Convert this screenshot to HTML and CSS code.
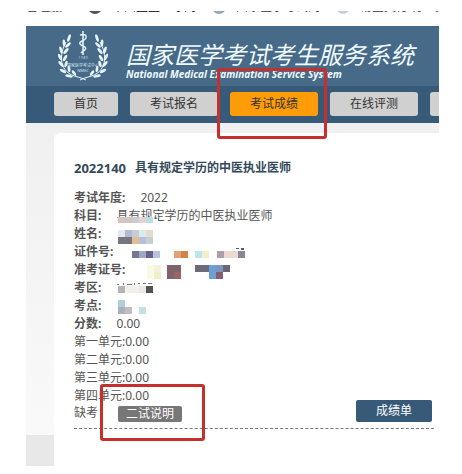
FILE: index.html
```html
<!DOCTYPE html>
<html lang="zh-CN">
<head>
<meta charset="utf-8">
<meta name="viewport" content="width=device-width, initial-scale=1">
<title>国家医学考试考生服务系统</title>
<link rel="stylesheet" href="styles.css">
</head>
<body>
<div class="page">
  <div class="bookmarks">
    <span>管理服</span>
    <span><i class="dot dark"></i>中国卫生人才网</span>
    <span><i class="dot"></i>国家医学考试网</span>
    <span><i class="dot pale"></i>易宝支付 行业支</span>
  </div>
  <header class="banner">
    <svg class="emblem" viewBox="0 0 50 52" aria-hidden="true">
      <defs>
        <g id="branch">
          <path d="M8 12C1 24 0 43 20 47Q24 48 28 50" fill="none" stroke="#e8f6ff" stroke-width="1"/>
          <g fill="#e8f6ff">
            <ellipse cx="11" cy="8" rx="1.4" ry="4" transform="rotate(18 11 8)"/>
            <ellipse cx="6" cy="13" rx="1.4" ry="3.6" transform="rotate(-5 6 13)"/>
            <ellipse cx="10" cy="15" rx="1.4" ry="3.6" transform="rotate(45 10 15)"/>
            <ellipse cx="3" cy="20" rx="1.4" ry="3.6" transform="rotate(-18 3 20)"/>
            <ellipse cx="8" cy="21" rx="1.4" ry="3.6" transform="rotate(40 8 21)"/>
            <ellipse cx="2" cy="27" rx="1.4" ry="3.6" transform="rotate(-28 2 27)"/>
            <ellipse cx="7" cy="28" rx="1.4" ry="3.6" transform="rotate(30 7 28)"/>
            <ellipse cx="3" cy="34" rx="1.4" ry="3.6" transform="rotate(-42 3 34)"/>
            <ellipse cx="8" cy="34" rx="1.4" ry="3.4" transform="rotate(15 8 34)"/>
            <ellipse cx="5" cy="41" rx="1.4" ry="3.6" transform="rotate(-60 5 41)"/>
            <ellipse cx="11" cy="39" rx="1.4" ry="3.2" transform="rotate(-5 11 39)"/>
            <ellipse cx="11" cy="46" rx="1.4" ry="3.8" transform="rotate(-78 11 46)"/>
            <ellipse cx="16" cy="43" rx="1.4" ry="3.2" transform="rotate(-35 16 43)"/>
          </g>
        </g>
      </defs>
      <use href="#branch"/>
      <use href="#branch" transform="translate(50 0) scale(-1 1)"/>
      <path d="M25 1V25M22 5Q29 3 28 8Q27 10 24 11Q20 13 23 15L27 17Q29 19 25 21L23 23" fill="none" stroke="#e8f6ff" stroke-width="1.5"/>
      <g fill="#cfe6f2" text-anchor="middle">
        <text x="25" y="29" font-size="3">1 9 8 5</text>
        <text x="25" y="37" font-size="4">国家医学考试中心</text>
        <text x="25" y="42" font-size="4">NMEC</text>
      </g>
    </svg>
    <div class="brand">
      <h1>国家医学考试考生服务系统</h1>
      <p>National Medical Examination Service System</p>
    </div>
  </header>
  <nav class="menu">
    <a href="#">首页</a>
    <a href="#">考试报名</a>
    <a href="#" class="active">考试成绩<span class="mark mark-menu"></span></a>
    <a href="#">在线评测</a>
    <a href="#" aria-label="更多"></a>
  </nav>
  <div class="body">
    <main class="panel">
      <h2><span class="code">2022140</span>具有规定学历的中医执业医师</h2>
      <section class="record">
        <dl>
          <div><dt>考试年度:</dt><dd>2022</dd></div>
          <div><dt>科目:</dt><dd>具有规定学历的中医执业医师</dd></div>
          <div><dt>姓名:</dt><dd></dd></div>
          <div><dt>证件号:</dt><dd></dd></div>
          <div><dt>准考证号:</dt><dd></dd></div>
          <div><dt>考区:</dt><dd></dd></div>
          <div><dt>考点:</dt><dd></dd></div>
          <div><dt>分数:</dt><dd>0.00</dd></div>
        </dl>
        <svg class="mosaic" viewBox="0 0 190 130" shape-rendering="crispEdges" aria-hidden="true">
          <path fill="#fff" d="M42 30h42v6H42z"/>
          <path fill="#d3c6c2" d="M44 28h14v6H44z"/><path fill="#c9cbd5" d="M58 28h7v6h-7z"/><path fill="#e4d4cb" d="M65 28h7v6h-7z"/><path fill="#b9dce6" d="M72 28h7v6h-7z"/>
          <path fill="#e5e7ee" d="M44 41h7v7h-7z"/><path fill="#aebbd5" d="M51 41h7v7h-7z"/><path fill="#c6cdd6" d="M58 41h7v7h-7z"/><path fill="#dce9ed" d="M65 41h7v7h-7z"/><path fill="#e6dccb" d="M72 41h7v7h-7z"/>
          <path fill="#77757f" d="M44 48h14v7H44z"/><path fill="#e5bd94" d="M58 48h7v7h-7z"/><path fill="#b7c2d9" d="M65 48h7v7h-7z"/><path fill="#c4d1d3" d="M72 48h7v7h-7z"/>
          <path fill="#74798f" d="M58 62h7v7h-7z"/><path fill="#9fa8c2" d="M65 62h7v7h-7z"/><path fill="#6c608f" d="M72 62h7v7h-7z"/><path fill="#bbc2da" d="M79 62h7v7h-7z"/>
          <path fill="#dfa476" d="M100 62h7v7h-7z"/><path fill="#cf8344" d="M107 62h7v7h-7z"/><path fill="#bde5ed" d="M121 62h7v7h-7z"/><path fill="#f1f0c8" d="M128 62h7v7h-7z"/>
          <path fill="#aca1aa" d="M143 62h7v7h-7z"/><path fill="#eadad0" d="M150 62h14v7h-14z"/><path fill="#888795" d="M164 62h7v7h-7z"/><path fill="#555d70" d="M162 59h3v1h-3zM167 59h3v2h-3z"/>
          <path fill="#f2f2dd" d="M80 76h7v7h-7z"/><path fill="#fbfae6" d="M73 76h7v14h-7z"/><path fill="#eef0c9" d="M80 83h7v7h-7z"/>
          <path fill="#80636a" d="M93 76h14v14H93z"/><path fill="#986564" d="M100 83h7v7h-7z"/>
          <path fill="#6d6b78" d="M121 76h14v7h-14z"/><path fill="#6c9fd2" d="M135 76h7v14h-7z"/><path fill="#7e94bd" d="M142 76h7v7h-7z"/><path fill="#6b6875" d="M149 76h7v7h-7z"/><path fill="#845e72" d="M142 83h7v7h-7z"/>
          <path fill="#777" d="M43 95h2v1h-2zM49 94h1v2h-1zM53 95h5v1h-5zM60 94h1v2h-1zM64 94h2v1h-2zM69 94h3v1h-3zM74 94h4v1h-4z"/>
          <path fill="#b8b2b8" d="M44 97h7v7h-7z"/><path fill="#f5efe9" d="M51 97h14v7H51z"/><path fill="#e9e9e5" d="M65 97h7v7h-7z"/><path fill="#535357" d="M72 97h7v7h-7z"/>
          <path fill="#b1cfda" d="M44 111h7v7h-7z"/><path fill="#aab1bd" d="M44 118h7v7h-7z"/><path fill="#c2bdc1" d="M51 118h7v7h-7z"/><path fill="#c4e1e1" d="M65 118h7v7h-7z"/>
        </svg>
        <ul class="units">
          <li>第一单元:0.00</li>
          <li>第二单元:0.00</li>
          <li>第三单元:0.00</li>
          <li>第四单元:0.00</li>
        </ul>
        <div class="actions">
          <span class="absent">缺考</span>
          <button type="button" class="note">二试说明<span class="mark mark-note"></span></button>
          <button type="button" class="report">成绩单</button>
        </div>
      </section>
    </main>
  </div>
</div>
</body>
</html>
```
FILE: styles.css
```css
* { box-sizing: border-box; }
body {
  margin: 0;
  background: #fff;
  color: #555;
  font: 12px/18px "Noto Sans", "Noto Sans CJK SC", sans-serif;
}
h1, h2, p, dl, dd, ul { margin: 0; padding: 0; }
.page { margin: 0 23px 0 26px; overflow-x: clip; }

/* only the lower edge of the bookmark bar is in view */
.bookmarks {
  display: flex;
  align-items: center;
  gap: 16px;
  height: 14px;
  margin-bottom: 12px;
  white-space: nowrap;
  color: #333;
  line-height: 14px;
  clip-path: inset(11px 0 0 0);
}
.bookmarks span { display: flex; flex: none; align-items: center; gap: 10px; }
.bookmarks span:first-child { margin-right: 10px; }
.dot { width: 14px; height: 14px; border: 3px solid #8fa9b8; border-radius: 50%; }
.dot.dark { border-color: #555; }
.dot.pale { border-color: #c3d0d8; }

.banner {
  display: flex;
  height: 60px;
  padding: 4px 0 0 32px;
  background: #466a88;
  color: #f0fbff;
  white-space: nowrap;
}
.emblem { flex: none; width: 50px; height: 52px; }
.brand { padding: 10px 0 0 18px; }
.brand h1 { font: italic 400 24px/28px "Noto Sans CJK SC", sans-serif; }
.brand p { font: italic 700 10px/12px "Open Sans", sans-serif; }

.menu {
  display: flex;
  gap: 12px;
  height: 37px;
  padding: 6px 0 0 28px;
  background: #365a78;
  white-space: nowrap;
}
.menu a {
  position: relative;
  flex: none;
  height: 24px;
  padding: 0 20px;
  border-radius: 3px;
  background: #d0d0d0;
  color: #333;
  line-height: 24px;
  text-decoration: none;
}
.menu .active { background: #ff9c08; }

.mark {
  position: absolute;
  z-index: 1;
  border: 3px solid #c5302c;
  border-radius: 3px;
  pointer-events: none;
}
.mark-menu { inset: -24px -9px -23px -13px; }
.mark-note { inset: -22px -23px -19px -18px; }

.body {
  padding: 10px 0 0 28px;
  background: linear-gradient(#e8e8e8, #e8e8e8) left bottom / 28px 31px no-repeat,
    linear-gradient(#f0f0f0, #fafafa);
}
.panel {
  padding: 26px 5px 37px 20px;
  border-top-left-radius: 6px;
  background: #fff;
}
.panel h2 {
  display: flex;
  align-items: center;
  gap: 9px;
  height: 18px;
  margin-bottom: 12px;
  color: #34495a;
  font-size: 12px;
}
.code { font-size: 13px; }
.record { position: relative; }
.record dl > div { display: flex; gap: 15px; height: 18px; }
dt { font-weight: 700; }
.mosaic { position: absolute; top: 0; left: 0; width: 190px; height: 130px; }
.units { list-style: none; }
.actions {
  display: flex;
  align-items: flex-end;
  height: 24px;
  padding-bottom: 6px;
  border-bottom: 1px dashed #777;
}
.absent { width: 44px; height: 18px; }
button {
  border: 0;
  border-radius: 2px;
  color: #fff;
  font: inherit;
}
.note { position: relative; height: 16px; padding: 0 8px; background: #777; line-height: 16px; }
.report { width: 76px; height: 22px; margin-left: auto; margin-right: 2px; padding: 0; background: #365a78; line-height: 22px; }
```
